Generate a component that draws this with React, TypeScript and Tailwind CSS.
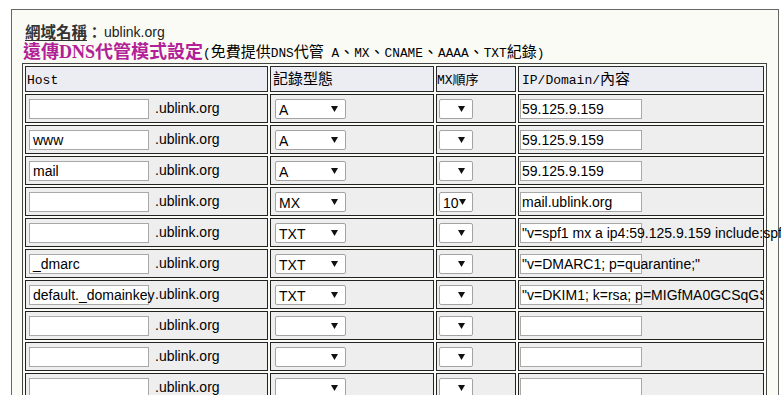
import React from "react";

type Row = {
  host: string;
  type: string;
  mx: string;
  ip: string;
  clip?: boolean;
};

const rows: Row[] = [
  { host: "", type: "A", mx: "", ip: "59.125.9.159" },
  { host: "www", type: "A", mx: "", ip: "59.125.9.159" },
  { host: "mail", type: "A", mx: "", ip: "59.125.9.159" },
  { host: "", type: "MX", mx: "10", ip: "mail.ublink.org" },
  {
    host: "",
    type: "TXT",
    mx: "",
    ip: '"v=spf1 mx a ip4:59.125.9.159 include:spf.protection.outlook.com ~all"',
  },
  { host: "_dmarc", type: "TXT", mx: "", ip: '"v=DMARC1; p=quarantine;"' },
  {
    host: "default._domainkey",
    type: "TXT",
    mx: "",
    ip: '"v=DKIM1; k=rsa; p=MIGfMA0GCSqGSIb3DQEBAQUAA4GNADCBiQKBgQC"',
    clip: true,
  },
  { host: "", type: "", mx: "", ip: "" },
  { host: "", type: "", mx: "", ip: "" },
  { host: "", type: "", mx: "", ip: "" },
];

const CJK = /[\u3000-\u303f\u3400-\u9fff\uff00-\uffef]/;

// old MingLiU look: full-width CJK, half-width latin
function Ming({ text, cjk, latin }: { text: string; cjk: string; latin: string }) {
  const parts = text.split(/([\u3000-\u303f\u3400-\u9fff\uff00-\uffef]+)/).filter(Boolean);
  return (
    <>
      {parts.map((p, i) =>
        CJK.test(p) ? (
          <span key={i} className={cjk}>
            {p}
          </span>
        ) : (
          <span key={i} className={latin}>
            {p}
          </span>
        )
      )}
    </>
  );
}

function Arrow() {
  return (
    <svg width="7" height="6" viewBox="0 0 7 6" className="shrink-0">
      <polygon points="0,0 7,0 3.5,6" fill="#111" />
    </svg>
  );
}

function Select({ value, className }: { value: string; className: string }) {
  return (
    <div
      className={`h-[20px] flex items-center justify-between bg-white border border-[#a3a3a3] rounded-[2px] pl-[3px] pr-[7px] text-[14px] text-black ${className}`}
    >
      <span className="leading-none pt-[2px]">{value}</span>
      <Arrow />
    </div>
  );
}

function TextBox({ value, className }: { value: string; className: string }) {
  return (
    <div
      className={`h-[20px] shrink-0 flex items-center bg-white border border-[#a9a9a9] whitespace-nowrap text-[14px] text-black ${className}`}
    >
      <span className="leading-none">{value}</span>
    </div>
  );
}

const head = "font-['Noto_Sans_CJK_TC',sans-serif] text-[15px]";
const headLatin = "font-['Liberation_Mono',monospace] text-[13px]";

export default function App() {
  return (
    <div className="w-[781px] h-[395px] overflow-hidden bg-white font-['Liberation_Sans',Arial,sans-serif]">
      <div className="ml-[11px] mt-[9px] w-[768px] border border-[#666] bg-[#fbfbf6] pl-[10px] pt-[12px] pb-[20px]">
        <div className="h-[20px] flex items-center pl-[3px] text-[#222]">
          <span className="font-['Noto_Sans_CJK_TC',sans-serif] text-[15.5px] font-bold underline underline-offset-2 text-[#333]">
            網域名稱
          </span>
          <span className="font-['Noto_Sans_CJK_TC',sans-serif] text-[15px] font-bold text-[#333]">：</span>
          <span className="text-[14px] ml-[2px]">ublink.org</span>
        </div>
        <div className="h-[21px] pb-[1px] flex items-center pl-[1px] whitespace-nowrap">
          <span className="font-['Liberation_Serif','Noto_Sans_CJK_TC',serif] text-[18px] font-bold text-[#b21f97]">
            遠傳DNS代管模式設定
          </span>
          <span className="text-black">
            <Ming
              text="(免費提供DNS代管 A、MX、CNAME、AAAA、TXT紀錄)"
              cjk="font-['Noto_Sans_CJK_TC',sans-serif] text-[15px]"
              latin="font-['Liberation_Mono',monospace] text-[12.8px]"
            />
          </span>
        </div>

        <table className="w-[745px] table-fixed border-separate border-spacing-[2px] border border-[#444]">
          <thead>
            <tr>
              <th className="w-[243px] h-[23px] border border-[#2a2a2a] bg-[#ececf3] text-left font-normal pl-[1px] text-black">
                <Ming text="Host" cjk={head} latin={headLatin} />
              </th>
              <th className="w-[164px] h-[23px] border border-[#2a2a2a] bg-[#ececf3] text-left font-normal pl-[2px] text-black">
                <Ming text="記錄型態" cjk={head} latin={headLatin} />
              </th>
              <th className="w-[80px] h-[23px] border border-[#2a2a2a] bg-[#ececf3] text-left font-normal pl-[0px] text-black">
                <Ming text="MX順序" cjk="font-['Noto_Sans_CJK_TC',sans-serif] text-[13px]" latin={headLatin} />
              </th>
              <th className="w-[246px] h-[23px] border border-[#2a2a2a] bg-[#ececf3] text-left font-normal pl-[3px] text-black">
                <Ming text="IP/Domain/內容" cjk={head} latin={headLatin} />
              </th>
            </tr>
          </thead>
          <tbody>
            {rows.map((r, i) => (
              <tr key={i}>
                <td className="h-[29px] border border-[#222] bg-[#eeeeee] pl-[3px] p-0">
                  <div className="flex items-center">
                    <TextBox value={r.host} className="w-[120px] pl-[3px]" />
                    <span className="ml-[6px] text-[14px] text-black">.ublink.org</span>
                  </div>
                </td>
                <td className="h-[29px] border border-[#222] bg-[#eeeeee] pl-[4px] p-0">
                  <Select value={r.type} className="w-[71px]" />
                </td>
                <td className="h-[29px] border border-[#222] bg-[#eeeeee] pl-[2px] p-0">
                  <Select value={r.mx} className="w-[34px]" />
                </td>
                <td
                  className={`h-[29px] border border-[#222] bg-[#eeeeee] pl-[1px] p-0 ${
                    r.clip ? "overflow-hidden" : "overflow-visible"
                  }`}
                >
                  <TextBox value={r.ip} className="w-[122px] pl-[1px]" />
                </td>
              </tr>
            ))}
          </tbody>
        </table>
      </div>
    </div>
  );
}
